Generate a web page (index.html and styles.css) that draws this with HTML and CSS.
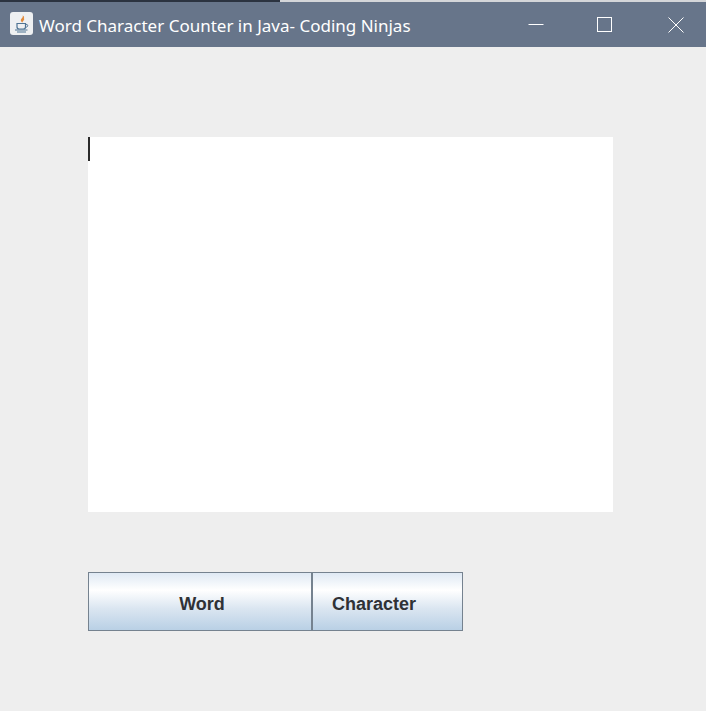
FILE: index.html
```html
<!DOCTYPE html>
<html lang="en">
<head>
    <meta charset="UTF-8">
    <meta name="viewport" content="width=device-width, initial-scale=1.0">
    <title>Word Character Counter in Java- Coding Ninjas</title>
    <link rel="stylesheet" href="styles.css">
</head>
<body>
    <div class="top-strip"></div>
    <div class="titlebar">
        <div class="app-icon">
            <svg width="16" height="18" viewBox="0 0 16 18">
                <path d="M8.500 0.500c1.500 2-2.500 3.200-1.500 5.500 0.400 0.800 1 1.300 1.300 1.800-0.100-1.500 3-2.800 1.500-4.800 0.800-1 0.200-1.700-1.300-2.500z" fill="#e08a3c"/>
                <path d="M3 8.500h8.500v3.500c0 1.300-1 2-2.200 2h-4c-1.300 0-2.300-0.700-2.300-2z" fill="none" stroke="#4f7494" stroke-width="1.200"/>
                <path d="M11.500 9.500h1.300c1.400 0 1.400 2.800-1.500 3" fill="none" stroke="#4f7494" stroke-width="1"/>
                <path d="M1 15h12.500M3 17h9" fill="none" stroke="#4f7494" stroke-width="1.100"/>
            </svg>
        </div>
        <span class="title">Word Character Counter in Java- Coding Ninjas</span>
        <div class="window-buttons">
            <svg class="win-btn" width="16" height="16" viewBox="0 0 16 16"><path d="M0.500 7.500h15" stroke="#fff" fill="none"/></svg>
            <svg class="win-btn" width="16" height="16" viewBox="0 0 16 16"><rect x="0.500" y="0.500" width="14" height="14" stroke="#fff" fill="none"/></svg>
            <svg class="win-btn win-close" width="16" height="16" viewBox="0 0 16 16"><path d="M0.500 0.500l15 15M15.500 0.500l-15 15" stroke="#fff" fill="none"/></svg>
        </div>
    </div>

    <div class="content">
        <div class="text-area"><div class="caret"></div></div>
        <div class="button-row">
            <button class="btn btn-word">Word</button>
            <button class="btn btn-char">Character</button>
        </div>
    </div>
</body>
</html>
```

FILE: styles.css
```css
body {
    margin: 0;
    padding: 0;
    height: 711px;
    overflow: hidden;
    background-color: #eeeeee;
    font-family: "Liberation Sans", Arial, sans-serif;
}
.top-strip {
    height: 2px;
    background: linear-gradient(to right, #2b3340 0, #2b3340 280px, #d4d6d9 280px);
}
.titlebar {
    display: flex;
    align-items: center;
    height: 45px;
    background-color: #67758a;
    color: white;
}
.app-icon {
    display: flex;
    align-items: center;
    justify-content: center;
    width: 23px;
    height: 23px;
    margin-left: 10px;
    margin-top: -2px;
    background-color: #eef0f2;
    border-radius: 3px;
}
.title {
    margin-left: 6px;
    margin-top: 1px;
    font-family: "Noto Sans", sans-serif;
    font-size: 17px;
    white-space: nowrap;
}
.window-buttons {
    display: flex;
    align-items: center;
    gap: 53px;
    margin-left: auto;
    margin-right: 22px;
    margin-top: 1px;
}
.win-btn {
    display: block;
}
.win-close {
    margin-left: 2px;
}
.content {
    padding: 90px 93px 0 88px;
}
.text-area {
    height: 375px;
    background-color: white;
}
.caret {
    width: 2px;
    height: 24px;
    background-color: #2a2a2a;
}
.button-row {
    display: flex;
    margin-top: 60px;
}
.btn {
    height: 59px;
    margin: 0;
    padding: 6px 0 0;
    border: 1px solid #75828f;
    border-radius: 0;
    background: linear-gradient(to bottom, #dfe9f4 0%, #ffffff 30%, #dbe6f1 62%, #b9d0e5 100%);
    color: #2f3236;
    font-family: "Liberation Sans", Arial, sans-serif;
    font-size: 18px;
    font-weight: bold;
    box-sizing: border-box;
}
.btn-word {
    width: 224px;
    padding-left: 4px;
}
.btn-char {
    width: 151px;
    padding-right: 27px;
}
```
